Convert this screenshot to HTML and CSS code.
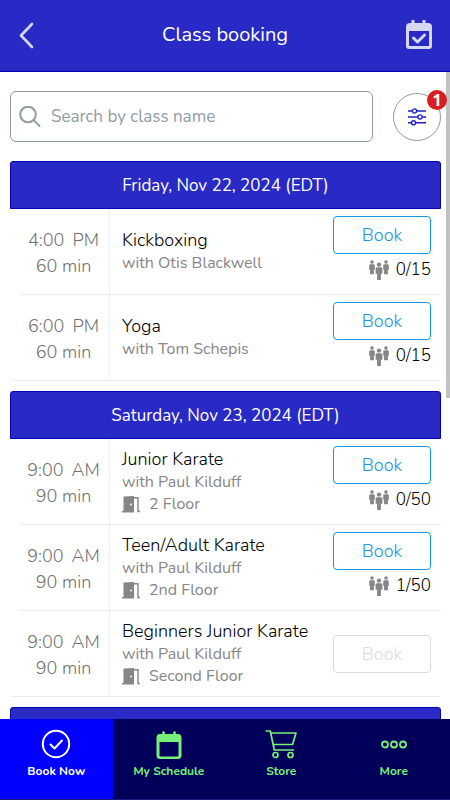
FILE: index.html
```html
<!DOCTYPE html>
<html lang="en">
<head>
<meta charset="utf-8">
<meta name="viewport" content="width=device-width, initial-scale=1">
<title>Class booking</title>
<link rel="stylesheet" href="styles.css">
</head>
<body>
<svg class="defs" aria-hidden="true">
  <symbol id="people" viewBox="0 0 20 20">
    <g id="person"><circle cx="3" cy="2" r="1.800"/><path d="M1.500 4.300h3q1.300 0 1.300 1.300v4.100h-.9V14.200H1.100V9.700H.2V5.600q0-1.300 1.300-1.300z"/></g>
    <use href="#person" x="14"/>
    <circle cx="10" cy="4.600" r="2.200"/><path d="M8 7.300h4q1.400 0 1.400 1.400v5h-1.500V20H8.100v-6.300H6.600v-5Q6.600 7.300 8 7.300z"/>
  </symbol>
  <symbol id="door" viewBox="0 0 18 17">
    <path d="M1.500 .5 12 0v16.500H0V15h1.500z"/><path d="M12 1.700h4V15.500h2" fill="none" stroke="currentColor" stroke-width="1.400"/><circle cx="9" cy="8.500" r="1" fill="#fff"/>
  </symbol>
</svg>
<header class="topbar">
  <button class="icon-button" aria-label="Back">
    <svg width="16" height="28" viewBox="0 0 16 28"><path d="M14 3 3 14.500 14 26" fill="none" stroke="currentColor" stroke-width="2.600" stroke-linecap="round" stroke-linejoin="round"/></svg>
  </button>
  <h1>Class booking</h1>
  <button class="icon-button" aria-label="My bookings">
    <svg width="26" height="30" viewBox="0 0 26 30" fill="none" stroke="currentColor"><path d="M4 3h18a4 4 0 0 1 4 4v19a3 3 0 0 1-3 3H3a3 3 0 0 1-3-3V7a4 4 0 0 1 4-4zM3 11v15h20V11z" fill="currentColor" fill-rule="evenodd" stroke="none"/><path d="M7 1v4M18 1v4" stroke-width="3" stroke-linecap="round"/><path d="m7.500 18 4 4 7-7" stroke-width="3" stroke-linecap="round" stroke-linejoin="round"/></svg>
  </button>
</header>
<div class="viewport">
<main class="content">
  <form class="search-row">
    <label class="search">
      <svg width="22" height="22" viewBox="0 0 22 22" fill="none" stroke="currentColor" stroke-width="2" stroke-linecap="round"><circle cx="9" cy="8.500" r="7.800"/><path d="m14.500 14 6 6"/></svg>
      <input type="text" placeholder="Search by class name" aria-label="Search by class name">
    </label>
    <button class="filter" type="button" aria-label="Filters, 1 active">
      <svg width="18" height="18" viewBox="0 0 18 18" fill="none" stroke="currentColor" stroke-width="1.400"><path d="M0 3h4.300M8.700 3H18M0 9h9.800M14.200 9H18M0 14.800h3.300M7.700 14.800H18"/><circle cx="6.500" cy="3" r="2.100"/><circle cx="12" cy="9" r="2.100"/><circle cx="5.500" cy="14.800" r="2.100"/></svg>
      <span class="badge">1</span>
    </button>
  </form>

  <section class="day">
    <h2>Friday, Nov 22, 2024 (EDT)</h2>
    <ul>
      <li class="class-row">
        <div class="time"><span><span>4:00</span><span>PM</span></span><span>60 min</span></div>
        <div class="info"><h3>Kickboxing</h3><p>with Otis Blackwell</p></div>
        <div class="action"><button class="book">Book</button><span class="spots"><svg width="20" height="20"><use href="#people"/></svg>0/15</span></div>
      </li>
      <li class="class-row">
        <div class="time"><span><span>6:00</span><span>PM</span></span><span>60 min</span></div>
        <div class="info"><h3>Yoga</h3><p>with Tom Schepis</p></div>
        <div class="action"><button class="book">Book</button><span class="spots"><svg width="20" height="20"><use href="#people"/></svg>0/15</span></div>
      </li>
    </ul>
  </section>

  <section class="day">
    <h2>Saturday, Nov 23, 2024 (EDT)</h2>
    <ul>
      <li class="class-row">
        <div class="time"><span><span>9:00</span><span>AM</span></span><span>90 min</span></div>
        <div class="info"><h3>Junior Karate</h3><p>with Paul Kilduff</p><p class="room"><svg width="18" height="17"><use href="#door"/></svg>2 Floor</p></div>
        <div class="action"><button class="book">Book</button><span class="spots"><svg width="20" height="20"><use href="#people"/></svg>0/50</span></div>
      </li>
      <li class="class-row">
        <div class="time"><span><span>9:00</span><span>AM</span></span><span>90 min</span></div>
        <div class="info"><h3>Teen/Adult Karate</h3><p>with Paul Kilduff</p><p class="room"><svg width="18" height="17"><use href="#door"/></svg>2nd Floor</p></div>
        <div class="action"><button class="book">Book</button><span class="spots"><svg width="20" height="20"><use href="#people"/></svg>1/50</span></div>
      </li>
      <li class="class-row">
        <div class="time"><span><span>9:00</span><span>AM</span></span><span>90 min</span></div>
        <div class="info"><h3>Beginners Junior Karate</h3><p>with Paul Kilduff</p><p class="room"><svg width="18" height="17"><use href="#door"/></svg>Second Floor</p></div>
        <div class="action"><button class="book" disabled>Book</button></div>
      </li>
    </ul>
  </section>

  <section class="day"><h2></h2></section>
</main>
<div class="scroll-thumb"></div>
</div>
<nav class="tabs">
  <a href="#book" class="active" aria-current="page">
    <svg width="30" height="30" viewBox="0 0 30 30" fill="none" stroke="currentColor" stroke-width="2"><circle cx="15" cy="15" r="13.200"/><path d="m9.500 15.500 4 4 7.500-8" stroke-linecap="round" stroke-linejoin="round"/></svg>
    Book Now</a>
  <a href="#schedule">
    <svg width="26" height="30" viewBox="0 0 26 30"><path d="M4 5h18a3.500 3.500 0 0 1 3.500 3.500V27a3.500 3.500 0 0 1-3.500 3H4A3.500 3.500 0 0 1 .5 27V8.500A3.500 3.500 0 0 1 4 5zM3.500 13v13.500a1 1 0 0 0 1 1h17a1 1 0 0 0 1-1V13z" fill="currentColor" fill-rule="evenodd"/><path d="M7.500 3.500v4M18.500 3.500v4" stroke="currentColor" stroke-width="2.600" stroke-linecap="round"/></svg>
    My Schedule</a>
  <a href="#store">
    <svg width="32" height="30" viewBox="0 0 32 30" fill="none" stroke="currentColor" stroke-width="1.700" stroke-linejoin="round"><path d="M.5 2h4.800l4 19H29M6 4h25l-3.500 11.500H8.500"/><circle cx="10.500" cy="26" r="2.500"/><circle cx="25.500" cy="26" r="2.500"/></svg>
    Store</a>
  <a href="#more">
    <svg width="28" height="30" viewBox="0 0 28 30" fill="none" stroke="currentColor" stroke-width="1.800"><circle cx="5" cy="15.500" r="3"/><circle cx="14" cy="15.500" r="3"/><circle cx="23" cy="15.500" r="3"/></svg>
    More</a>
</nav>
</body>
</html>
```
FILE: styles.css
```css
* { box-sizing: border-box; }

body {
  margin: 0;
  height: 100vh;
  display: flex;
  flex-direction: column;
  background: #fff;
  color: #111;
  font-family: Nunito, Lato, sans-serif;
  font-size: 17px;
}

h1, h2, h3, p, ul { margin: 0; padding: 0; font-weight: 400; }
ul { list-style: none; }
button, input { font: inherit; }
.defs { position: absolute; width: 0; height: 0; }

.topbar {
  flex: none;
  display: flex;
  align-items: center;
  justify-content: space-between;
  height: 72px;
  padding: 0 18px 2px;
  background: #2929c5;
  border-bottom: 1px solid #0000b4;
  color: #fff;
}
.topbar h1 { font-size: 20px; line-height: 28px; }
.icon-button {
  display: flex;
  width: 26px;
  padding: 0;
  border: 0;
  background: none;
  color: #d6d6f5;
}

.viewport { position: relative; flex: 1; min-height: 0; }
.content {
  height: 100%;
  padding: 19px 9px 0 10px;
  overflow-y: auto;
  scrollbar-width: none;
}
.scroll-thumb {
  position: absolute;
  top: 0;
  right: 0;
  width: 4px;
  height: 326px;
  background: #c1c1c1;
}

.search-row {
  display: flex;
  align-items: center;
  gap: 20px;
  margin-bottom: 19px;
}
.search {
  flex: 1;
  display: flex;
  align-items: center;
  gap: 10px;
  height: 51px;
  padding: 0 8px;
  border: 1px solid #8f9ca4;
  border-radius: 6px;
  color: #8f9ca4;
}
.search svg { flex: none; }
.search input {
  flex: 1;
  min-width: 0;
  padding: 0;
  border: 0;
  outline: 0;
  background: none;
  color: #333;
}
.search input::placeholder { color: #8f9ca4; opacity: 1; }
.filter {
  position: relative;
  display: flex;
  align-items: center;
  justify-content: center;
  width: 48px;
  height: 48px;
  padding: 0;
  border: 1px solid #8f9ca4;
  border-radius: 50%;
  background: #fff;
  color: #2020c8;
}
.badge {
  position: absolute;
  top: -4px;
  right: -7px;
  width: 20px;
  height: 20px;
  border-radius: 50%;
  background: #d81e1e;
  color: #fff;
  font: 700 16px/20px "Noto Sans", sans-serif;
  text-align: center;
}
.viewport .badge { z-index: 1; }

.day { margin-bottom: 10px; }
.day h2 {
  height: 48px;
  border: 1px solid #0000b4;
  border-radius: 3px 3px 0 0;
  background: #2929c5;
  color: #fff;
  font-size: 17px;
  line-height: 48px;
  text-align: center;
}
.class-row {
  display: flex;
  height: 86px;
  margin-left: 10px;
  border-bottom: 1px solid #e9edef;
}
.class-row:last-child {
  margin-left: 0;
  padding-left: 10px;
  border-radius: 0 0 3px 3px;
}
.time {
  flex: none;
  display: flex;
  flex-direction: column;
  justify-content: center;
  align-items: center;
  width: 90px;
  padding: 3px 2px 0 0;
  border-right: 1px dotted #dfe4e6;
  color: #707070;
  font-size: 18px;
  font-weight: 300;
  line-height: 26px;
}
.time > span { display: flex; gap: 8px; }
.info {
  flex: 1;
  display: flex;
  flex-direction: column;
  justify-content: center;
  min-width: 0;
  padding-left: 12px;
  color: #868686;
  font-size: 16px;
  line-height: 22px;
  white-space: nowrap;
}
.info h3 { color: #000; font-size: 18px; font-weight: 300; line-height: 23px; }
.room { display: flex; align-items: center; gap: 9px; }
.room svg, .spots svg { color: #868686; fill: #868686; }
.action {
  flex: none;
  display: flex;
  flex-direction: column;
  justify-content: center;
  align-items: flex-end;
  gap: 3px;
  padding-right: 10px;
}
.book {
  width: 98px;
  height: 38px;
  padding: 0;
  border: 1px solid #1496e6;
  border-radius: 4px;
  background: #fff;
  color: #1496e6;
  font-size: 18px;
  font-weight: 300;
}
.book:disabled { border-color: #dcdcdc; color: #dcdcdc; }
.spots {
  display: flex;
  align-items: center;
  gap: 7px;
  margin-bottom: 4px;
  color: #000;
  font-size: 17px;
  font-weight: 300;
  line-height: 26px;
}

.tabs {
  flex: none;
  display: grid;
  grid-template-columns: repeat(4, 1fr);
  height: 81px;
  background: #00005a;
  border-bottom: 1px solid #1a1a7a;
}
.tabs a {
  display: flex;
  flex-direction: column;
  align-items: center;
  gap: 4px;
  padding-top: 10px;
  color: #78f078;
  font-size: 12px;
  font-weight: 700;
  line-height: 16px;
  text-decoration: none;
}
.tabs a.active { background: #00f; color: #fff; }
```
